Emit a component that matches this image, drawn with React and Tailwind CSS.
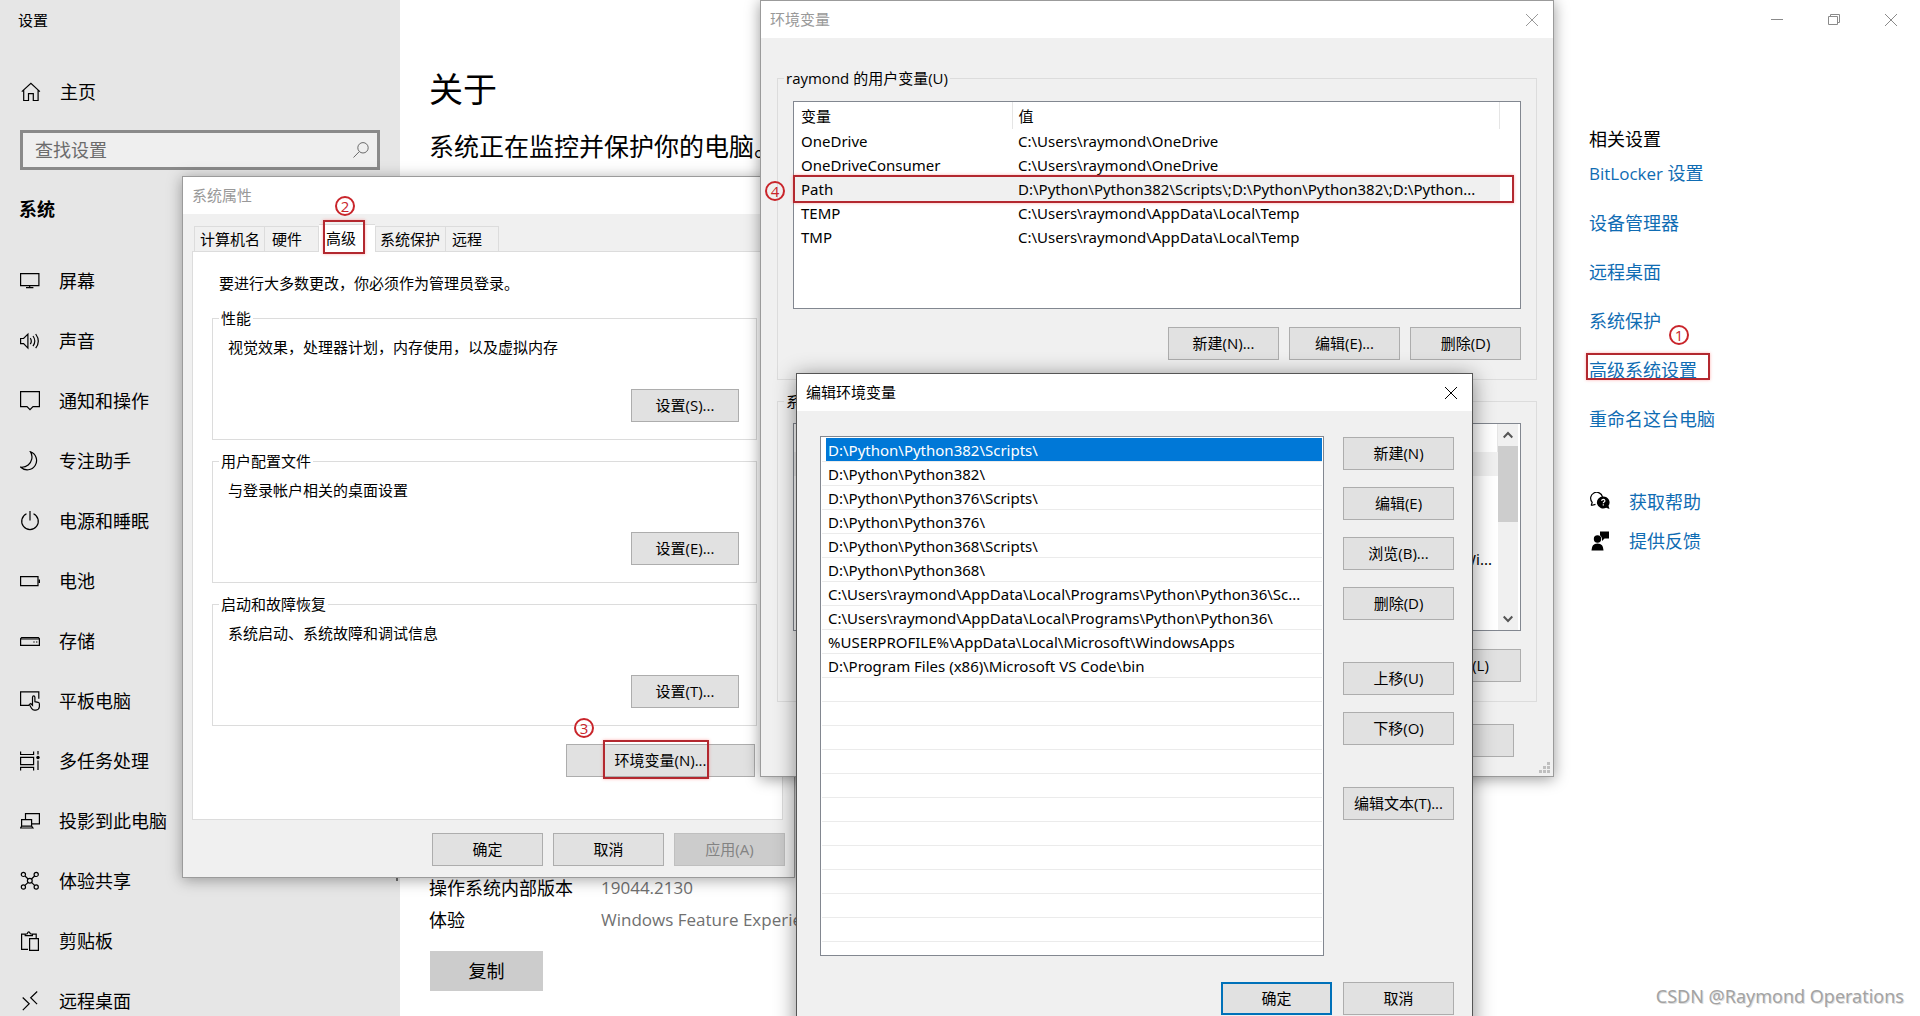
const FONT = "font-['Open_Sans','Noto_Sans_CJK_SC',sans-serif]";
const LIST_FONT = "font-['Noto_Sans','Noto_Sans_CJK_SC',sans-serif]";

function Icon({ children, className = "size-5" }) {
  return (
    <svg viewBox="0 0 20 20" className={className} fill="none" stroke="currentColor" strokeWidth="1.2" aria-hidden="true">
      {children}
    </svg>
  );
}

const NAV = [
  ["屏幕", <><path d="M.6 2.6h18.3v12H.6zM9.7 14.6v2M6 16.6h7.4" /></>],
  ["声音", <><path d="M.6 7.5h3l4.3-4.4v14L3.600 12.700h-3z" /><path d="M10.300 7.200q2 3 0 6M13 5q3.600 5 0 10.200M15.700 3q5.200 7.200 0 14.200" /></>],
  ["通知和操作", <path d="M.6.600h18.800v15h-6.400L10 18.700l-3-3.100H.6z" />],
  ["专注助手", <path d="M10.500.800a9.300 9.300 0 1 1-9.700 15.400c6 .6 10-3.600 11-8.400.5-2.800 0-5-1.300-7z" />],
  ["电源和睡眠", <><path d="M10 0v9.500" /><path d="M6.500 2.800a8.300 8.300 0 1 0 7 0" /></>],
  ["电池", <><path d="M.6 5.600h17.400v9H.6z" /><path d="M19.300 8.500v3.500" strokeWidth="1.500" /></>],
  ["存储", <><path d="M1.600 6.600h16.800l1 1.200v6.600H.6V7.800z" /><path d="M.6 8h18.800M13.300 11h1.400M16 11h1.400" /></>],
  ["平板电脑", <><path d="M9 14.400H.6V.800h18.200v7" /><path d="M9.300 13.500l1.500-1 1.700 1.800V6.200q.1-1.300 1.200-1.300t1.200 1.300v4.500l3.200.6q1.300.4 1.300 1.800v2.700q-.4 3.200-3.500 3.400h-1.500q-1.600-.1-2.600-1.500z" /></>],
  ["多任务处理", <><path d="M.6.500v3h13v-3M.6 6.300h13v7.400H.6zM.6 19.500v-3.200h13v3.200M18 0v3.500M18 9.500V19" /><circle cx="18" cy="6.500" r="1.700" fill="currentColor" stroke="none" /></>],
  ["投影到此电脑", <><path d="M5.500 8V2.600h13.900v10.300H12M1.600 8.600h10v6.600h-10zM.5 17l1.200-1.800h9.900l1.300 1.800z" /></>],
  ["体验共享", <><circle cx="3.400" cy="3.400" r="2.100" /><circle cx="16.200" cy="3.400" r="2.100" /><circle cx="3.400" cy="16" r="2.100" /><circle cx="16.200" cy="16" r="2.100" /><circle cx="9.800" cy="9.700" r="2.400" /><path d="M5 5l3.100 3M14.600 5l-3.100 3M5 14.400l3.100-3M14.600 14.400l-3.100-3" /></>],
  ["剪贴板", <><path d="M8 18.400H1.600V3.100h3.600M12.500 3.100h3.700v4M5.200 4.600V3.100l2-.3Q8.700-.9 10.400 2.800l2 .3v1.500z" /><path d="M9.600 7.600h8.800v11.800H9.600z" /></>],
  ["远程桌面", <path d="M2.700 6.500l6.500 6.300-6.400 6.300M17.200.500l-6.500 6.300 6.400 6.300" />],
];

const LINKS = ["设备管理器", "远程桌面", "系统保护"];

function CloseIcon() {
  return (
    <svg viewBox="0 0 12 12" className="size-3" fill="none" stroke="currentColor" aria-hidden="true">
      <path d="M0 0l12 12M12 0L0 12" />
    </svg>
  );
}

function Badge({ children, className }) {
  return (
    <span className={`absolute z-10 flex size-5 items-center justify-center rounded-full border-2 border-[#c9252b] text-[15px] leading-none text-[#c9252b] ${className}`}>
      {children}
    </span>
  );
}

function Frame({ className }) {
  return <span className={`pointer-events-none absolute z-10 border-2 border-[#b3282f] shadow-[0_0_3px_rgba(255,60,60,0.4)] ${className}`} />;
}

function Btn({ children, className = "w-[111px]", disabled }) {
  return (
    <button
      type="button"
      disabled={disabled}
      className={`flex h-[33px] items-center justify-center border border-[#adadad] bg-[#e1e1e1] pb-0.5 whitespace-nowrap disabled:border-[#bfbfbf] disabled:bg-[#cccccc] disabled:text-[#838383] ${className}`}
    >
      {children}
    </button>
  );
}

function TitleBar({ title, active, close = true }) {
  return (
    <header className={`flex h-[37px] items-center justify-between bg-white pr-[15px] pl-[9px] ${active ? "text-black" : "text-[#999999]"}`}>
      <h2 className="pb-0.5">{title}</h2>
      {close && <button type="button" aria-label="关闭"><CloseIcon /></button>}
    </header>
  );
}

function Group({ title, children, className = "" }) {
  return (
    <fieldset className={`border border-[#dcdcdc] ${className}`}>
      <legend className="ml-1.5 px-0.5">{title}</legend>
      {children}
    </fieldset>
  );
}

function Sidebar() {
  return (
    <aside className="relative w-[400px] shrink-0 overflow-hidden bg-[#e6e6e6] text-[18px]">
      <h1 className="flex h-10 items-center pl-[18px] text-[15px]">设置</h1>
      <a href="#home" className="mt-8 flex h-10 items-center gap-[19px] pl-[21px]">
        <Icon>
          <path d="M.8 9.600L9.900 1.200l9 8.400M2.700 8v10.500h4.800v-6.800h4.800v6.800h4.800V8" />
        </Icon>
        主页
      </a>
      <div className="relative mx-5 mt-[18px]">
        <input
          aria-label="查找设置"
          placeholder="查找设置"
          className="h-10 w-full border-3 border-[#8a8a8a] bg-[#efefef] pl-3 outline-none placeholder:text-[#6b6b6b]"
        />
        <svg viewBox="0 0 16 16" className="absolute top-3 right-[11px] size-4 text-[#6b6b6b]" fill="none" stroke="currentColor" aria-hidden="true">
          <circle cx="10" cy="5.800" r="5.200" />
          <path d="M6.300 9.600L.5 15.500" />
        </svg>
      </div>
      <h2 className="mt-[19px] flex h-10 items-center pl-[19px] font-bold">系统</h2>
      <nav className="mt-[22px]">
        {NAV.map(([label, icon]) => (
          <a key={label} href="#nav" className="flex h-[60px] items-center gap-[19px] pl-5">
            <Icon>{icon}</Icon>
            {label}
          </a>
        ))}
      </nav>
      <span className="absolute top-[251px] right-[2px] h-[630px] w-0.5 bg-[#6f6f6f]" />
    </aside>
  );
}

function SettingsPage() {
  return (
    <div className="flex min-w-0 flex-1 flex-col bg-white">
      <header className="flex h-10 shrink-0 justify-end pr-px text-[#8a8a8a]">
        <button type="button" aria-label="最小化" className="flex w-[57px] items-center justify-center">
          <svg viewBox="0 0 12 12" className="size-3" stroke="currentColor"><path d="M0 5.500h12" /></svg>
        </button>
        <button type="button" aria-label="还原" className="flex w-[57px] items-center justify-center">
          <svg viewBox="0 0 12 12" className="size-3" fill="none" stroke="currentColor"><path d="M.5 2.500h9v8h-9zM2.500 2.500V.500h9v8h-2" /></svg>
        </button>
        <button type="button" aria-label="关闭" className="flex w-[57px] items-center justify-center">
          <CloseIcon />
        </button>
      </header>
      <div className="flex flex-1">
        <main className="flex flex-1 flex-col pl-[29px]">
          <h2 className="mt-[29px] text-[34px] leading-10">关于</h2>
          <p className="mt-5 text-[25px] leading-[34px]">系统正在监控并保护你的电脑。</p>
          <dl className="mt-auto grid grid-cols-[172px_1fr] text-[18px] leading-8">
            <dt>操作系统内部版本</dt>
            <dd className="text-[17px] text-[#707070]">19044.2130</dd>
            <dt>体验</dt>
            <dd className="text-[17px] text-[#707070]">Windows Feature Experience Pack</dd>
          </dl>
          <button type="button" className="mt-[15px] mb-[25px] ml-px h-10 w-[113px] bg-[#cccccc] text-[18px]">复制</button>
        </main>
        <aside className="flex w-[331px] shrink-0 flex-col items-start pt-[87px] text-[18px] leading-6">
          <h3>相关设置</h3>
          <nav className="mt-2.5 flex flex-col items-start gap-[25px] text-[#0f6cb3]">
            <a href="#bitlocker"><span className="text-[17px]">BitLocker </span>设置</a>
            {LINKS.map((l) => <a key={l} href="#related">{l}</a>)}
            <a href="#advanced" className="relative">
              高级系统设置
              <Frame className="-top-[5px] -right-[13px] bottom-0.5 -left-[3px]" />
              <Badge className="-top-[33px] right-2">1</Badge>
            </a>
            <a href="#rename">重命名这台电脑</a>
          </nav>
          <nav className="mt-[59px] ml-px flex flex-col gap-[15px] text-[#0f6cb3]">
            <a href="#help" className="flex items-center gap-[19px]">
              <Icon className="size-5 text-black">
                <path d="M1.200 13.500l1-3.200A6 6 0 1 1 12.500 5M1.200 13.500l4.300-1.200" />
                <path d="M13.200 4.500a6.200 6 0 1 0 3 11.200l3.300 1.300-1-3.200a6.200 6 0 0 0-5.300-9.300z" fill="currentColor" stroke="none" />
                <path d="M11.600 8.800q.2-1.500 1.700-1.500t1.600 1.500q0 .8-.8 1.300t-.8 1.200M13.300 12.300v1.300" stroke="white" />
              </Icon>
              获取帮助
            </a>
            <a href="#feedback" className="flex items-center gap-[19px]">
              <Icon className="size-5 text-black">
                <g fill="currentColor" stroke="none">
                  <circle cx="7.500" cy="8" r="3.700" />
                  <path d="M1.500 19.500q0-7 6-7t6 7z" />
                  <path d="M10 .500h9v7h-4.500l-2.500 2.500V7.500a6 6 0 0 0-2-3.200z" />
                </g>
              </Icon>
              提供反馈
            </a>
          </nav>
        </aside>
      </div>
    </div>
  );
}

const TAB = "flex h-[25px] items-center border border-[#dcdcdc] border-b-0 bg-[#f0f0f0]";

function SystemProperties() {
  const groups = [
    ["性能", "视觉效果，处理器计划，内存使用，以及虚拟内存", "设置(S)..."],
    ["用户配置文件", "与登录帐户相关的桌面设置", "设置(E)..."],
    ["启动和故障恢复", "系统启动、系统故障和调试信息", "设置(T)..."],
  ];
  return (
    <section className="absolute top-[176px] left-[182px] w-[613px] border border-[#9b9b9b] bg-[#f0f0f0] shadow-[0_2px_14px_rgba(0,0,0,0.35)]">
      <TitleBar title="系统属性" close={false} />
      <div className="pt-2.5 pr-[11px] pl-[9px]">
        <div role="tablist" className="flex items-end pl-0.5">
          <button type="button" role="tab" className={`${TAB} w-[71px] pl-[5px]`}>计算机名</button>
          <button type="button" role="tab" className={`${TAB} w-[54px] border-l-0 pl-[7px]`}>硬件</button>
          <button type="button" role="tab" aria-selected="true" className="relative -mb-px flex h-7 w-[56px] items-center border-t border-[#dcdcdc] bg-white pb-0.5 pl-[7px]">
            高级
            <Frame className="-top-[5px] right-2.5 -bottom-[2px] left-1" />
            <Badge className="-top-[29px] left-4">2</Badge>
          </button>
          <button type="button" role="tab" className={`${TAB} w-[71px] pl-1`}>系统保护</button>
          <button type="button" role="tab" className={`${TAB} w-[53px] border-l-0 pl-1.5`}>远程</button>
        </div>
        <div role="tabpanel" className="border border-[#dcdcdc] bg-white pt-[21px] pr-[25px] pb-[42px] pl-[19px]">
          <p className="mb-[15px] pl-[7px]">要进行大多数更改，你必须作为管理员登录。</p>
          <div className="flex flex-col gap-[11px]">
            {groups.map(([title, text, btn]) => (
              <Group key={title} title={title} className="pr-[17px] pb-[17px]">
                <p className="mt-[9px] pl-[15px]">{text}</p>
                <Btn className="mt-8 ml-auto w-[108px]">{btn}</Btn>
              </Group>
            ))}
          </div>
          <div className="relative mt-[18px] mr-0.5 ml-auto w-[189px]">
            <Btn className="w-full">环境变量(N)...</Btn>
            <Frame className="-top-1 right-[46px] -bottom-0.5 left-[37px]" />
            <Badge className="-top-[26px] left-2">3</Badge>
          </div>
        </div>
      </div>
      <footer className="flex justify-end gap-2.5 pt-[13px] pr-[9px] pb-[11px]">
        <Btn>确定</Btn>
        <Btn>取消</Btn>
        <Btn disabled>应用(A)</Btn>
      </footer>
    </section>
  );
}

const USER_VARS = [
  ["OneDrive", "C:\\Users\\raymond\\OneDrive"],
  ["OneDriveConsumer", "C:\\Users\\raymond\\OneDrive"],
  ["Path", "D:\\Python\\Python382\\Scripts\\;D:\\Python\\Python382\\;D:\\Python..."],
  ["TEMP", "C:\\Users\\raymond\\AppData\\Local\\Temp"],
  ["TMP", "C:\\Users\\raymond\\AppData\\Local\\Temp"],
];

function EnvironmentVariables() {
  return (
    <section className="absolute top-0 left-[760px] w-[794px] border border-[#9b9b9b] bg-[#f0f0f0] shadow-[0_2px_14px_rgba(0,0,0,0.4)]">
      <TitleBar title="环境变量" />
      <div className="px-4 pt-[30px] pb-[19px]">
        <Group title="raymond 的用户变量(U)" className="pb-[19px]">
          <div className="relative mx-[15px] mt-[13px] h-[208px] border border-[#828790] bg-white">
            <table className="w-[706px] table-fixed border-collapse text-left">
              <colgroup><col className="w-[218px]" /><col /></colgroup>
              <thead>
                <tr className="h-[27px]">
                  <th className="border-r border-[#e5e5e5] pl-[7px] font-normal">变量</th>
                  <th className="border-r border-[#e5e5e5] pl-[6px] font-normal">值</th>
                </tr>
              </thead>
              <tbody className={LIST_FONT}>
                {USER_VARS.map(([name, value]) => (
                  <tr key={name} className={name === "Path" ? "h-6 bg-[#f0f0f0]" : "h-6"}>
                    <td className="pl-[7px]">{name}</td>
                    <td className="pl-[6px] whitespace-nowrap">{value}</td>
                  </tr>
                ))}
              </tbody>
            </table>
            <Frame className="top-[73px] right-1.5 -left-px h-7" />
            <Badge className="top-[79px] -left-[29px]">4</Badge>
          </div>
          <div className="mx-[15px] mt-[18px] flex justify-end gap-2.5">
            <Btn>新建(N)...</Btn>
            <Btn>编辑(E)...</Btn>
            <Btn>删除(D)</Btn>
          </div>
        </Group>
        <Group title="系统变量(S)" className="mt-[11px] pb-[19px]">
          <div className="mx-[15px] mt-3 flex h-[208px] justify-end border border-[#828790] bg-white pr-0.5">
            <div className="flex-1 border-[#e5e5e5]">
              <div className="h-7 border-r border-[#e5e5e5]" />
              <div className="h-6 bg-[#f0f0f0]" />
              <p className={`mt-[71px] pr-1.5 text-right leading-6 ${LIST_FONT}`}>C:\Windows\system32;C:\Windows;C:\Wi...</p>
            </div>
            <div className="flex w-5 flex-col items-center justify-between bg-[#f0f0f0] py-[7px] text-[#555555]">
              <svg viewBox="0 0 10 8" className="h-2 w-2.5" fill="none" stroke="currentColor" strokeWidth="2"><path d="M.7 6.500L5 2l4.300 4.500" /></svg>
              <span className="mt-[7px] mb-auto h-[76px] w-full bg-[#cdcdcd]" />
              <svg viewBox="0 0 10 8" className="h-2 w-2.5" fill="none" stroke="currentColor" strokeWidth="2"><path d="M.7 1.500L5 6l4.300-4.500" /></svg>
            </div>
          </div>
          <div className="mx-[15px] mt-[18px] flex justify-end gap-2.5">
            <Btn>新建(W)...</Btn>
            <Btn>编辑(I)...</Btn>
            <Btn>删除(L)</Btn>
          </div>
        </Group>
        <div className="mt-[22px] mr-[23px] flex justify-end gap-2.5">
          <Btn>确定</Btn>
          <Btn>取消</Btn>
        </div>
      </div>
      <svg viewBox="0 0 11 11" className="absolute right-[3px] bottom-[3px] size-[11px] fill-[#bfbfbf]" aria-hidden="true">
        <path d="M8 0h3v3H8zM8 4h3v3H8zM8 8h3v3H8zM4 4h3v3H4zM4 8h3v3H4zM0 8h3v3H0z" />
      </svg>
    </section>
  );
}

const PATHS = [
  "D:\\Python\\Python382\\Scripts\\",
  "D:\\Python\\Python382\\",
  "D:\\Python\\Python376\\Scripts\\",
  "D:\\Python\\Python376\\",
  "D:\\Python\\Python368\\Scripts\\",
  "D:\\Python\\Python368\\",
  "C:\\Users\\raymond\\AppData\\Local\\Programs\\Python\\Python36\\Sc...",
  "C:\\Users\\raymond\\AppData\\Local\\Programs\\Python\\Python36\\",
  "%USERPROFILE%\\AppData\\Local\\Microsoft\\WindowsApps",
  "D:\\Program Files (x86)\\Microsoft VS Code\\bin",
];

function EditVariable() {
  const rows = [...PATHS, ...Array(11).fill("")];
  return (
    <section className="absolute top-[373px] left-[796px] w-[677px] border border-[#555555] bg-[#f0f0f0] shadow-[0_3px_20px_rgba(0,0,0,0.45)]">
      <TitleBar title="编辑环境变量" active />
      <div className="pt-[25px] pr-[18px] pb-6 pl-[23px]">
        <div className="flex gap-[19px]">
          <ul className={`h-[520px] flex-1 overflow-hidden border border-[#828790] bg-white p-px ${LIST_FONT}`}>
            {rows.map((row, i) => (
              <li key={i} className="h-6 border-b border-[#ebebeb] pl-1 leading-[25px] whitespace-nowrap">
                <span className={i === 0 ? "block h-[23px] bg-[#0078d7] pl-0.5 text-white" : "block h-[23px] pl-0.5"}>{row}</span>
              </li>
            ))}
          </ul>
          <div className="flex flex-col gap-[17px] pt-px">
            <Btn>新建(N)</Btn>
            <Btn>编辑(E)</Btn>
            <Btn>浏览(B)...</Btn>
            <Btn>删除(D)</Btn>
            <Btn className="mt-[25px] w-[111px]">上移(U)</Btn>
            <Btn>下移(O)</Btn>
            <Btn className="mt-[25px] w-[111px]">编辑文本(T)...</Btn>
          </div>
        </div>
        <div className="mt-[26px] flex justify-end gap-[11px]">
          <Btn className="w-[111px] outline-2 -outline-offset-2 outline-[#0071b9]">确定</Btn>
          <Btn>取消</Btn>
        </div>
      </div>
    </section>
  );
}

export default function App() {
  return (
    <div className={`relative flex h-screen overflow-hidden text-[15px] leading-5 text-black ${FONT}`}>
      <Sidebar />
      <SettingsPage />
      <SystemProperties />
      <EnvironmentVariables />
      <EditVariable />
      <p className={`absolute right-4 bottom-1.5 text-[18px] leading-7 text-[#a3a3a3] [text-shadow:1px_1px_0_#dddddd] ${LIST_FONT}`}>
        CSDN @Raymond Operations
      </p>
    </div>
  );
}
